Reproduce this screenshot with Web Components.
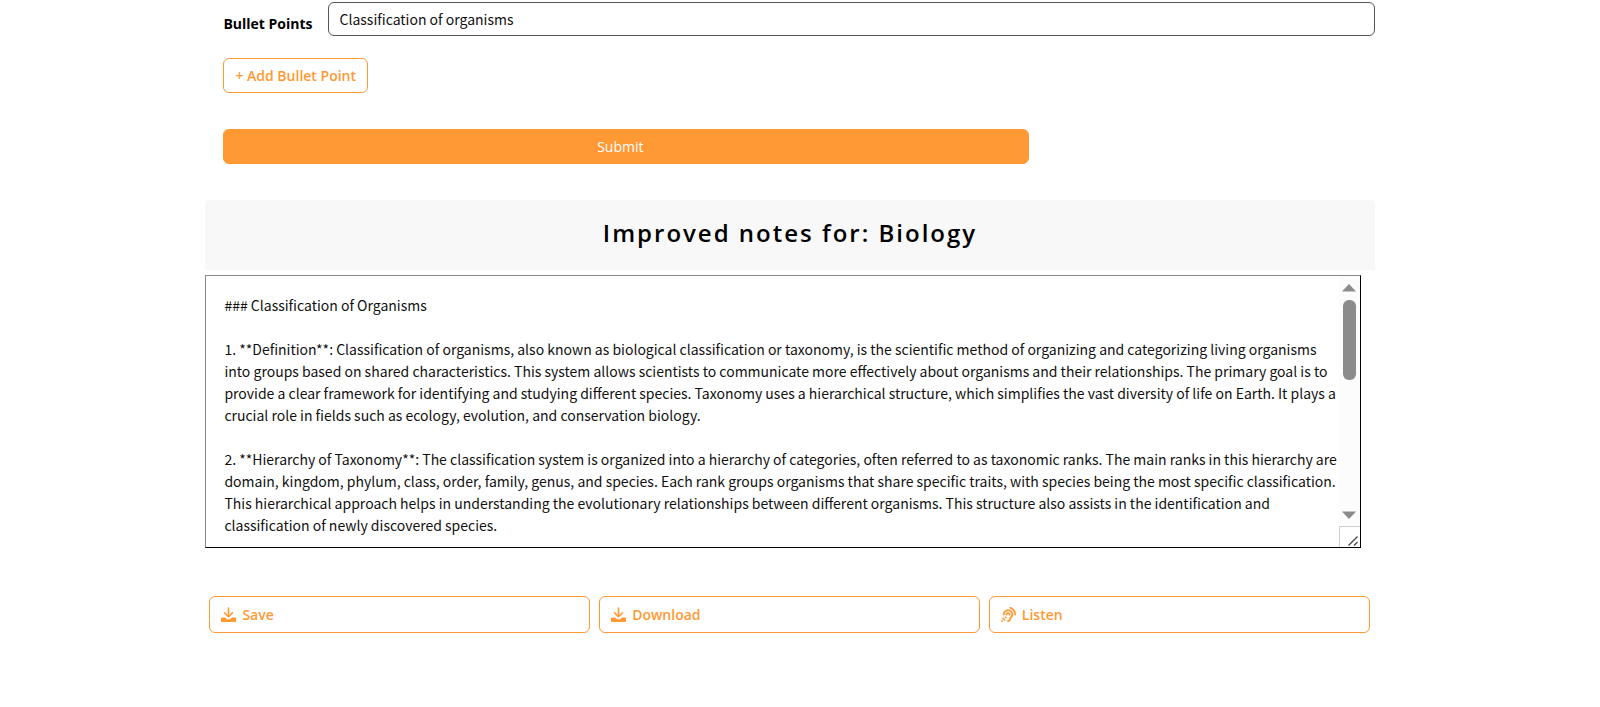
<!DOCTYPE html>
<html lang="en">
<head>
<meta charset="utf-8">
<title>Improved notes</title>
<style>
    body {
        --field-font: "Noto Sans CJK SC", "Open Sans", sans-serif;
        margin: 0;
        padding-right: 20px;
        background: #fff;
        color: #000;
        font: 14px/22px "Open Sans", "Noto Sans", sans-serif;
    }
</style>
</head>
<body>
<notes-page>
    <bullet-form value="Classification of organisms"></bullet-form>
    <notes-result subject="Biology">### Classification of Organisms

1. **Definition**: Classification of organisms, also known as biological classification or taxonomy, is the scientific method of organizing and categorizing living organisms into groups based on shared characteristics. This system allows scientists to communicate more effectively about organisms and their relationships. The primary goal is to provide a clear framework for identifying and studying different species. Taxonomy uses a hierarchical structure, which simplifies the vast diversity of life on Earth. It plays a crucial role in fields such as ecology, evolution, and conservation biology.

2. **Hierarchy of Taxonomy**: The classification system is organized into a hierarchy of categories, often referred to as taxonomic ranks. The main ranks in this hierarchy are domain, kingdom, phylum, class, order, family, genus, and species. Each rank groups organisms that share specific traits, with species being the most specific classification. This hierarchical approach helps in understanding the evolutionary relationships between different organisms. This structure also assists in the identification and classification of newly discovered species.
</notes-result>
    <note-actions>
        <action-button icon="download">Save</action-button>
        <action-button icon="download">Download</action-button>
        <action-button icon="listen">Listen</action-button>
    </note-actions>
</notes-page>

<script>
class NotesPage extends HTMLElement {
    constructor() {
        super();
        this.attachShadow({ mode: "open" });
        this.shadowRoot.innerHTML = `
            <style>
                :host {
                    display: block;
                    width: 74%;
                    margin: 0 auto;
                }
            </style>
            <slot></slot>
        `;
    }
}

class BulletForm extends HTMLElement {
    constructor() {
        super();
        this.attachShadow({ mode: "open" });
        this.render();
    }

    render() {
        this.shadowRoot.innerHTML = `
            <style>
                :host {
                    display: block;
                    padding: 2px 0 0 18px;
                }

                .row {
                    display: flex;
                    align-items: center;
                    gap: 15px;
                }

                label {
                    flex: none;
                    padding-top: 9px;
                    font-weight: 700;
                    white-space: nowrap;
                }

                input {
                    flex: 1;
                    min-width: 0;
                    box-sizing: border-box;
                    height: 34px;
                    padding: 0 11px;
                    border: 1px solid #555;
                    border-radius: 6px;
                    background: #fff;
                    font: inherit;
                    font-family: var(--field-font);
                    color: #111;
                }

                button {
                    display: block;
                    box-sizing: border-box;
                    height: 35px;
                    padding: 0 11px;
                    border: 1px solid #ff9933;
                    border-radius: 6px;
                    font: inherit;
                }

                .add {
                    margin: 22px 0 36px;
                    background: #fff;
                    color: #ff9933;
                    font-weight: 600;
                }

                .submit {
                    width: 70%;
                    padding-right: 23px;
                    background: #ff9933;
                    color: #fff;
                }
            </style>
            <form>
                <div class="row">
                    <label for="point">Bullet Points</label>
                    <input id="point" type="text">
                </div>
                <button class="add" type="button">+ Add Bullet Point</button>
                <button class="submit" type="button">Submit</button>
            </form>
        `;
        this.shadowRoot.querySelector("input").value = this.getAttribute("value") || "";
    }
}

class NotesResult extends HTMLElement {
    constructor() {
        super();
        this.attachShadow({ mode: "open" });
        this.render();
        this.textarea = this.shadowRoot.querySelector("textarea");
        this.thumb = this.shadowRoot.querySelector(".thumb");
        // trailing blank lines leave room to keep writing
        this.textarea.value = this.textContent + "\n".repeat(18);
        this.textarea.addEventListener("scroll", () => this.updateThumb());
        this.shadowRoot.querySelector(".up").addEventListener("click", () => this.textarea.scrollBy(0, -44));
        this.shadowRoot.querySelector(".down").addEventListener("click", () => this.textarea.scrollBy(0, 44));
    }

    updateThumb() {
        const area = this.textarea;
        const ratio = area.scrollTop / (area.scrollHeight - area.clientHeight);
        const room = this.thumb.parentElement.clientHeight - this.thumb.offsetHeight;
        this.thumb.style.marginTop = Math.round(ratio * room) + "px";
    }

    render() {
        this.shadowRoot.innerHTML = `
            <style>
                :host {
                    display: block;
                    margin-top: 36px;
                }

                h2 {
                    margin: 0 0 5px;
                    padding: 17px 0 21px;
                    border-radius: 4px 4px 0 0;
                    background: #f8f8f8;
                    font-size: 24px;
                    line-height: 32px;
                    font-weight: 600;
                    letter-spacing: 2px;
                    text-align: center;
                }

                .frame {
                    display: flex;
                    box-sizing: border-box;
                    height: 273px;
                    margin-right: 14px;
                    border: 1px solid #000;
                    border-top-color: #888;
                    border-left-color: #888;
                }

                textarea {
                    flex: 1;
                    min-width: 0;
                    box-sizing: border-box;
                    margin: 0;
                    padding: 18px 0 18px 18px;
                    border: 0;
                    outline: 0;
                    background: #fff;
                    color: #111;
                    font: inherit;
                    font-family: var(--field-font);
                    resize: none;
                    scrollbar-width: none;
                }

                .bar {
                    flex: none;
                    display: flex;
                    flex-direction: column;
                    width: 21px;
                    background: #fcfcfc;
                }

                button {
                    display: flex;
                    align-items: center;
                    justify-content: center;
                    height: 23px;
                    padding: 0;
                    border: 0;
                    background: none;
                }

                svg {
                    display: block;
                    fill: #8b8b8b;
                }

                .track {
                    flex: 1;
                    padding: 1px 4px;
                }

                .thumb {
                    height: 80px;
                    border-radius: 6px;
                    background: #8b8b8b;
                }

                .grip {
                    display: flex;
                    align-items: flex-end;
                    justify-content: flex-end;
                    box-sizing: border-box;
                    height: 21px;
                    padding: 0 2px 1px 0;
                    border: 1px solid #d0d0d0;
                    border-width: 1px 0 0 1px;
                    background: #fff;
                }
            </style>
            <h2>Improved notes for: ${this.getAttribute("subject")}</h2>
            <div class="frame">
                <textarea aria-label="Improved notes"></textarea>
                <div class="bar">
                    <button class="up" type="button" aria-label="Scroll up">
                        <svg width="14" height="8" viewBox="0 0 14 8"><path d="M7 0l7 7.500H0z"/></svg>
                    </button>
                    <div class="track"><div class="thumb"></div></div>
                    <button class="down" type="button" aria-label="Scroll down">
                        <svg width="14" height="8" viewBox="0 0 14 8"><path d="M7 8L0 .5h14z"/></svg>
                    </button>
                    <div class="grip">
                        <svg width="10" height="10" viewBox="0 0 10 10"><path d="M.5 9.500l9-9M6 9.500L9.500 6" stroke="#444" stroke-width="1.300"/></svg>
                    </div>
                </div>
            </div>
        `;
    }
}

class NoteActions extends HTMLElement {
    constructor() {
        super();
        this.attachShadow({ mode: "open" });
        this.shadowRoot.innerHTML = `
            <style>
                :host {
                    display: grid;
                    grid-template-columns: repeat(3, 1fr);
                    gap: 9px;
                    padding: 48px 5px 48px 4px;
                }
            </style>
            <slot></slot>
        `;
    }
}

const icons = {
    download: `
        <svg viewBox="0 0 15 15">
            <path d="M7.500 1v8.500M3.500 5.800l4 4 4-4" fill="none" stroke="currentColor" stroke-width="1.600" stroke-linecap="round" stroke-linejoin="round"/>
            <path d="M1 10.500h3l2 1.800h3l2-1.800h3a1 1 0 0 1 1 1V14a1 1 0 0 1-1 1H1a1 1 0 0 1-1-1v-2.500a1 1 0 0 1 1-1z"/>
        </svg>`,
    listen: `
        <svg viewBox="0 0 512 512">
            <path d="M216 260c0 15.464-12.536 28-28 28s-28-12.536-28-28c0-44.112 35.888-80 80-80s80 35.888 80 80c0 15.464-12.536 28-28 28s-28-12.536-28-28c0-13.234-10.767-24-24-24s-24 10.766-24 24zm24-176c-97.047 0-176 78.951-176 176 0 15.464 12.536 28 28 28s28-12.536 28-28c0-66.168 53.832-120 120-120s120 53.832 120 120c0 75.164-71.009 70.311-71.997 143.622L288 404c0 28.673-23.327 52-52 52-15.464 0-28 12.536-28 28s12.536 28 28 28c59.475 0 107.876-48.328 108-107.774.595-34.428 72-48.24 72-144.226 0-97.049-78.952-176-176-176zm-80 236c-17.673 0-32 14.327-32 32s14.327 32 32 32 32-14.327 32-32-14.327-32-32-32zM32 448c-17.673 0-32 14.327-32 32s14.327 32 32 32 32-14.327 32-32-14.327-32-32-32zm480-187.993c0-1.518-.012-3.025-.045-4.531C510.076 140.525 436.157 38.47 327.994 1.511c-14.633-4.998-30.549 2.809-35.55 17.442-5 14.633 2.81 30.549 17.442 35.55 85.906 29.354 144.61 110.513 146.077 201.953l.003.188c.026 1.118.033 2.236.033 3.363 0 15.464 12.536 28 28 28s28.001-12.536 28.001-28zM152.971 439.029l-80-80L39.03 392.97l80 80 33.941-33.941z" stroke="currentColor" stroke-width="8"/>
        </svg>`
};

class ActionButton extends HTMLElement {
    constructor() {
        super();
        this.attachShadow({ mode: "open" });
        this.render();
    }

    render() {
        this.shadowRoot.innerHTML = `
            <style>
                :host {
                    display: block;
                }

                button {
                    display: flex;
                    align-items: center;
                    gap: 6px;
                    box-sizing: border-box;
                    width: 100%;
                    height: 37px;
                    padding: 0 11px;
                    border: 1px solid #ff9933;
                    border-radius: 6px;
                    background: #fff;
                    color: #ff9933;
                    font: inherit;
                    font-weight: 600;
                }

                svg {
                    width: 15px;
                    height: 15px;
                    fill: currentColor;
                }
            </style>
            <button type="button">${icons[this.getAttribute("icon")]}<slot></slot></button>
        `;
    }
}

customElements.define("notes-page", NotesPage);
customElements.define("bullet-form", BulletForm);
customElements.define("notes-result", NotesResult);
customElements.define("note-actions", NoteActions);
customElements.define("action-button", ActionButton);
</script>
</body>
</html>
